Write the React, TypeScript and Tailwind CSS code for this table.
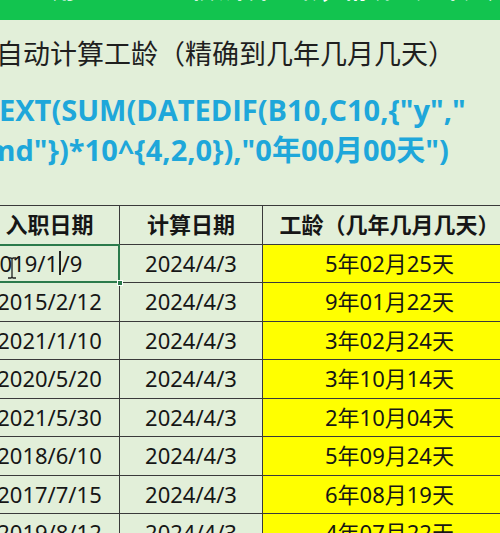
import React from 'react';

const rows = [
  { start: '2019/1/9', end: '2024/4/3', age: '5年02月25天' },
  { start: '2015/2/12', end: '2024/4/3', age: '9年01月22天' },
  { start: '2021/1/10', end: '2024/4/3', age: '3年02月24天' },
  { start: '2020/5/20', end: '2024/4/3', age: '3年10月14天' },
  { start: '2021/5/30', end: '2024/4/3', age: '2年10月04天' },
  { start: '2018/6/10', end: '2024/4/3', age: '5年09月24天' },
  { start: '2017/7/15', end: '2024/4/3', age: '6年08月19天' },
  { start: '2019/8/12', end: '2024/4/3', age: '4年07月22天' },
];

const cjk = { fontFamily: '"Noto Sans", "Noto Sans CJK SC", sans-serif' };

const cell = 'h-[38.5px] border-r border-b border-[#3a3a3a] flex items-center justify-center text-[22px] text-[#161616]';

export default function App() {
  return (
    <div className="w-[500px] h-[533px] overflow-hidden bg-[#e2efd9] relative" style={cjk}>
      {/* top banner, mostly cut off */}
      <div className="h-[20px] bg-[#12c44f] overflow-hidden">
        <div className="-mt-[25px] text-white text-[24px] leading-[28px] whitespace-nowrap pl-[4px] font-bold">
          一、用DATEDIF函数计算工龄，精确到几年几月几天
        </div>
      </div>

      <div className="mt-[16px] -ml-[4px] text-[27px] leading-[36px] text-[#1f1f1f] whitespace-nowrap">
        自动计算工龄（精确到几年几月几天）
      </div>

      <div
        className="mt-[18px] text-[29px] leading-[40px] font-bold text-[#1ea7da] whitespace-nowrap"
        style={{ fontFamily: '"Open Sans", "Noto Sans CJK SC", sans-serif' }}
      >
        <div className="-ml-[1px]">EXT(SUM(DATEDIF(B10,C10,{'{'}"y","</div>
        <div className="-ml-[13px]">md"{'}'})*10^{'{'}4,2,0{'}'}),"0年00月00天")</div>
      </div>

      <div className="mt-[35px] -ml-[20px] grid grid-cols-[140px_143px_254px] border-t border-[#3a3a3a]">
        <div className={`${cell} font-bold`}>入职日期</div>
        <div className={`${cell} font-bold`}>计算日期</div>
        <div className={`${cell} font-bold`}>工龄（几年几月几天）</div>

        {rows.map((r, i) => (
          <React.Fragment key={i}>
            {i === 0 ? (
              <div className={`${cell} !justify-start pl-[7px] relative`}>
                <span>2019/1</span>
                <span className="inline-block w-[1.5px] h-[24px] bg-[#222] mx-[1px]" />
                <span>/9</span>
                <div className="absolute -left-px -top-px -right-px -bottom-px border-2 border-[#2b7a4b]" />
                <div className="absolute -right-[4px] -bottom-[4px] w-[6px] h-[6px] bg-[#2b7a4b] border border-white" />
                <svg className="absolute left-[27px] top-[12px]" width="10" height="22" viewBox="0 0 10 22">
                  <path d="M1 1h3l1 1 1-1h3M5 2v18M1 21h3l1-1 1 1h3" fill="none" stroke="#222" strokeWidth="1.3" />
                </svg>
              </div>
            ) : (
              <div className={cell}>{r.start}</div>
            )}
            <div className={cell}>{r.end}</div>
            <div className={`${cell} bg-[#ffff00]`}>{r.age}</div>
          </React.Fragment>
        ))}
      </div>
    </div>
  );
}
